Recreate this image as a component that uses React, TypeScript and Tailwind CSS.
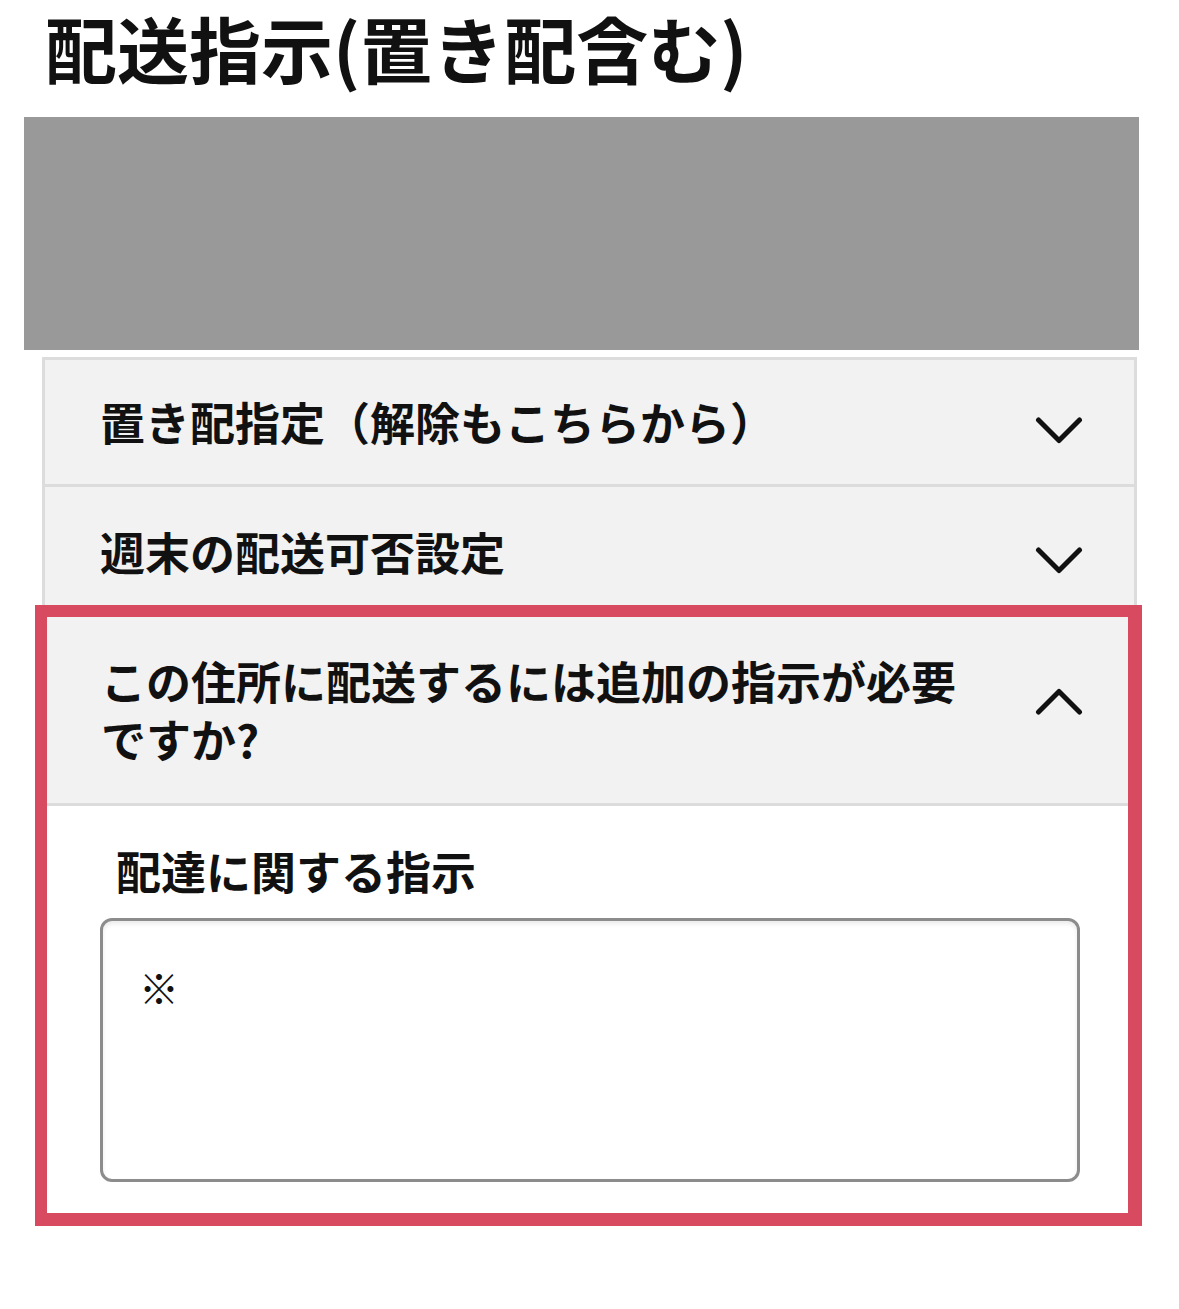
import React from "react";

const FONT = "font-['Noto_Sans_CJK_JP','Noto_Sans_CJK_SC',sans-serif]";

function ChevronDown() {
  return (
    <svg width="48" height="44" viewBox="0 0 48 44" fill="none" className="shrink-0">
      <path d="M3.5 20 L24 40.5 L44.5 20" stroke="#111111" strokeWidth="5" strokeLinecap="round" strokeLinejoin="round" />
    </svg>
  );
}

function ChevronUp() {
  return (
    <svg width="48" height="44" viewBox="0 0 48 44" fill="none" className="shrink-0">
      <path d="M3.5 24 L24 3.5 L44.5 24" stroke="#111111" strokeWidth="5" strokeLinecap="round" strokeLinejoin="round" />
    </svg>
  );
}

export default function App() {
  return (
    <div className={`w-[1179px] h-[1309px] bg-white text-[#111111] ${FONT}`}>
      <h1 className="pl-[45px] h-[96px] text-[72px] leading-[94px] font-bold whitespace-nowrap">
        配送指示(置き配含む)
      </h1>

      <div className="mt-[21px] ml-[24px] w-[1115px] h-[233px] bg-[#999999]" />

      <div className="mt-[7px] ml-[42px] w-[1095px] border-x-[3px] border-t-[3px] border-[#dcdcdc] bg-[#f2f2f2]">
        <div className="h-[127px] flex items-center justify-between pl-[55px] pr-[51px] border-b-[3px] border-[#dcdcdc]">
          <span className="text-[45px] leading-[58px] font-bold whitespace-nowrap">置き配指定（解除もこちらから）</span>
          <ChevronDown />
        </div>
        <div className="h-[130px] flex items-center justify-between pl-[55px] pr-[51px]">
          <span className="text-[45px] leading-[58px] font-bold whitespace-nowrap">週末の配送可否設定</span>
          <ChevronDown />
        </div>

        <div className="relative">
          <div className="h-[189px] flex items-center justify-between pl-[56px] pr-[51px] border-b-[3px] border-[#dcdcdc]">
            <span className="w-[880px] text-[45px] leading-[58px] font-bold">この住所に配送するには追加の指示が必要ですか?</span>
            <ChevronUp />
          </div>
          <div className="bg-white pl-[55px] pt-[40px] pb-[31px]">
            <div className="ml-[16px] text-[45px] leading-[50px] font-bold">配達に関する指示</div>
            <div className="mt-[22px] w-[980px] h-[264px] rounded-[12px] border-[3px] border-[#8c8c8c] bg-white shadow-[inset_0_3px_4px_rgba(0,0,0,0.08)] pl-[36px] pt-[42px]">
              <span className="text-[40px] leading-[48px] font-normal">※</span>
            </div>
          </div>
          <div className="absolute -left-[10px] -top-[12px] -right-[8px] -bottom-[13px] border-[12px] border-r-[14px] border-b-[13px] border-[#d74a5f] pointer-events-none" />
        </div>
      </div>
    </div>
  );
}
